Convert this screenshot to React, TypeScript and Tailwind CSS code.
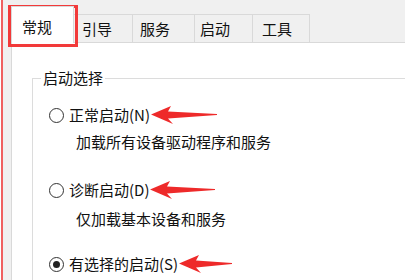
const font = { fontFamily: '"Noto Sans CJK SC", "Noto Sans", sans-serif' };

function Arrow({ w }: { w: number }) {
    return (
        <svg width={w} height="18" viewBox={`0 0 ${w} 18`} className="shrink-0">
            <polygon points={`0,8.5 20,0 17,5.5 ${w},8 ${w},9 17,12.5 22,18`} fill="#ee2a2a" />
        </svg>
    );
}

function Radio({ checked }: { checked?: boolean }) {
    return (
        <span className="flex h-[15px] w-[15px] shrink-0 items-center justify-center rounded-full border-[1.5px] border-[#333]">
            {checked && <span className="h-[7px] w-[7px] rounded-full bg-[#222]" />}
        </span>
    );
}

function Option({ label, arrow, checked }: { label: string; arrow: number; checked?: boolean }) {
    return (
        <div className="flex h-[20px] items-center pl-[16px]">
            <Radio checked={checked} />
            <span className="ml-[5px] text-[15px] leading-[20px] text-[#111]">{label}</span>
            <span className="ml-[1px] flex">
                <Arrow w={arrow} />
            </span>
        </div>
    );
}

const tabs = [
    { name: "引导", w: "w-[59px]", pl: "pl-[8px]" },
    { name: "服务", w: "w-[62px]", pl: "pl-[7px]" },
    { name: "启动", w: "w-[58px]", pl: "pl-[5px]" },
    { name: "工具", w: "w-[57px]", pl: "pl-[9px]" },
];

export default function App() {
    return (
        <div className="relative flex h-[280px] w-[420px] overflow-hidden bg-white" style={font}>
            <div className="h-full w-[3px] border-l border-white bg-[#f06060]" />
            <div className="flex h-full w-[402px] flex-col">
                <div className="h-[3px] bg-white" />
                <div className="flex flex-1 bg-[#f0f0f0]">
                    <div className="w-[8px]" />
                    <div className="flex flex-1 flex-col">
                        <div className="flex h-[42px] items-end">
                            <div className="relative z-10 -mb-px h-[37px] w-[63px] border-x border-t border-[#d9d9d9] bg-white pl-[10px] pt-[11px] text-[15px] leading-[17px] text-[#111]">
                                常规
                            </div>
                            {tabs.map((t) => (
                                <div
                                    key={t.name}
                                    className={`flex h-[28px] items-center border-r border-t border-[#d9d9d9] ${t.w} ${t.pl} text-[15px] leading-[20px] text-[#111]`}
                                >
                                    {t.name}
                                </div>
                            ))}
                        </div>
                        <div className="flex-1 border-l border-t border-[#d9d9d9] bg-white pl-[20px] pt-[25px]">
                            <fieldset className="h-[260px] border-l border-t border-[#dcdcdc]">
                                <legend className="ml-[8px] px-[2px] text-[15px] leading-[20px] text-[#111]">启动选择</legend>
                                <div className="mt-[17px]">
                                    <Option label="正常启动(N)" arrow={66} />
                                </div>
                                <div className="mt-[7px] h-[20px] pl-[43px] text-[15px] leading-[20px] text-[#111]">
                                    加载所有设备驱动程序和服务
                                </div>
                                <div className="mt-[28px]">
                                    <Option label="诊断启动(D)" arrow={65} />
                                </div>
                                <div className="mt-[9px] h-[20px] pl-[43px] text-[15px] leading-[20px] text-[#111]">
                                    仅加载基本设备和服务
                                </div>
                                <div className="mt-[25px]">
                                    <Option label="有选择的启动(S)" arrow={53} checked />
                                </div>
                            </fieldset>
                        </div>
                    </div>
                </div>
            </div>
            <div className="absolute left-[8px] top-[5px] h-[42px] w-[70px] border-[3px] border-[#f23a3a]" />
        </div>
    );
}
